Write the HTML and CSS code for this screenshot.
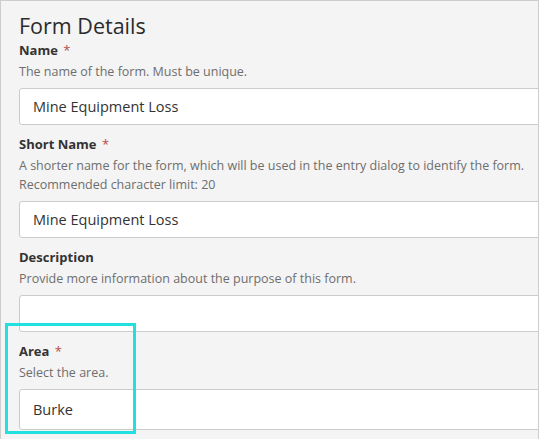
FILE: index.html
```html
<!DOCTYPE html>
<html>
<head>
<meta charset="utf-8">
<link rel="stylesheet" href="styles.css">
</head>
<body>
<div class="panel">
  <h1 class="title">Form Details</h1>
  <div class="field">
    <div class="label">Name <span class="req">*</span></div>
    <div class="help">The name of the form. Must be unique.</div>
    <div class="input">Mine Equipment Loss</div>
  </div>
  <div class="field">
    <div class="label">Short Name <span class="req">*</span></div>
    <div class="help">A shorter name for the form, which will be used in the entry dialog to identify the form.<br>Recommended character limit: 20</div>
    <div class="input">Mine Equipment Loss</div>
  </div>
  <div class="field">
    <div class="label">Description</div>
    <div class="help">Provide more information about the purpose of this form.</div>
    <div class="input"></div>
  </div>
  <div class="field">
    <div class="label">Area <span class="req">*</span></div>
    <div class="help">Select the area.</div>
    <div class="input select">Burke</div>
  </div>
  <div class="highlight"></div>
</div>
</body>
</html>
```
FILE: styles.css
```css
html, body {
  margin: 0;
  padding: 0;
  height: 100%;
}
body {
  font-family: "Open Sans", "Noto Sans", sans-serif;
  color: #333;
}
.panel {
  position: relative;
  box-sizing: border-box;
  height: 100%;
  background: #f4f4f4;
  border: 1px solid #cdcdcd;
  border-bottom: none;
  padding: 10px 0 0 18px;
  overflow: hidden;
}
.title {
  margin: 0;
  font-size: 21.5px;
  line-height: 30px;
  font-weight: 400;
  color: #2b2b2b;
}
.field + .field {
  margin-top: 10px;
}
.label {
  font-size: 13px;
  line-height: 18px;
  font-weight: 700;
  color: #333;
}
.req {
  color: #b94a48;
  font-weight: 400;
  margin-left: 2px;
}
.help {
  margin-top: 3px;
  font-size: 12.5px;
  line-height: 19px;
  color: #6e6e6e;
}
.input {
  box-sizing: border-box;
  margin-top: 7px;
  margin-right: -20px;
  height: 37px;
  background: #fff;
  border: 1px solid #cccccc;
  border-radius: 3px;
  padding-left: 13px;
  font-size: 14.5px;
  line-height: 35px;
  color: #333;
}
.input.select {
  height: 41px;
  line-height: 39px;
}
.highlight {
  position: absolute;
  left: 4px;
  top: 322px;
  width: 125px;
  height: 105px;
  border: 3px solid #22e0e0;
}
```
